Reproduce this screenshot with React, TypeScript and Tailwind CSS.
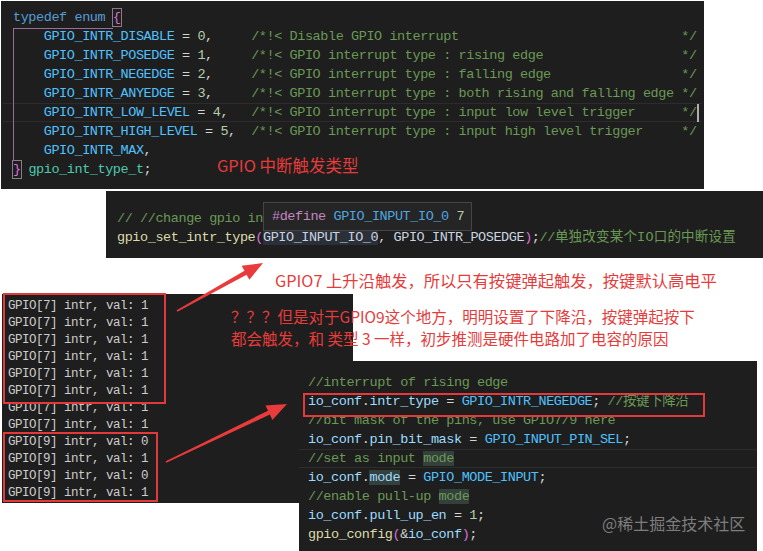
import React from "react";

const kw = "text-[#569cd6]";
const en = "text-[#4fc1ff]";
const op = "text-[#d4d4d4]";
const num = "text-[#b5cea8]";
const cm = "text-[#6a9955]";
const ty = "text-[#4ec9b0]";
const fn = "text-[#dcdcaa]";
const br = "text-[#da70d6]";
const va = "text-[#9cdcfe]";
const mc = "text-[#c8d4e0]";

const mono =
  "font-['Liberation_Mono','Noto_Sans_CJK_SC',monospace] text-[13.5px] tracking-[-0.42px] whitespace-pre";
const red =
  "font-['Noto_Sans_CJK_SC','Noto_Sans',sans-serif] text-[#e63b3b] whitespace-pre";

type Tok = [string, string];

const enumRows: [string, string, string][] = [
  ["GPIO_INTR_DISABLE", "0", "/*!< Disable GPIO interrupt"],
  ["GPIO_INTR_POSEDGE", "1", "/*!< GPIO interrupt type : rising edge"],
  ["GPIO_INTR_NEGEDGE", "2", "/*!< GPIO interrupt type : falling edge"],
  ["GPIO_INTR_ANYEDGE", "3", "/*!< GPIO interrupt type : both rising and falling edge"],
  ["GPIO_INTR_LOW_LEVEL", "4", "/*!< GPIO interrupt type : input low level trigger"],
  ["GPIO_INTR_HIGH_LEVEL", "5", "/*!< GPIO interrupt type : input high level trigger"],
];

function Line({ toks, className = "" }: { toks: Tok[]; className?: string }) {
  return (
    <div className={"h-[19px] leading-[19px] " + className}>
      {toks.map(([t, c], i) => (
        <span key={i} className={c}>
          {t}
        </span>
      ))}
    </div>
  );
}

function Arrow({ x1, y1, x2, y2 }: { x1: number; y1: number; x2: number; y2: number }) {
  const dx = x2 - x1;
  const dy = y2 - y1;
  const len = Math.hypot(dx, dy);
  const ux = dx / len;
  const uy = dy / len;
  const px = -uy;
  const py = ux;
  const headLen = 20;
  const headW = 8;
  const bx = x2 - ux * headLen;
  const by = y2 - uy * headLen;
  const t0 = 0.8;
  const t1 = 2.2;
  const pts = [
    [x1 + px * t0, y1 + py * t0],
    [bx + px * t1, by + py * t1],
    [bx + px * headW, by + py * headW],
    [x2, y2],
    [bx - px * headW, by - py * headW],
    [bx - px * t1, by - py * t1],
    [x1 - px * t0, y1 - py * t0],
  ]
    .map((p) => p[0].toFixed(1) + "," + p[1].toFixed(1))
    .join(" ");
  return <polygon points={pts} fill="#e93b3b" />;
}

export default function App() {
  return (
    <div className="relative w-[763px] h-[551px] bg-white overflow-hidden">
      {/* Panel 1: enum */}
      <div className={"absolute left-[1px] top-[1px] w-[703px] h-[188px] bg-[#1e1e1e] pt-[7px] flex flex-col " + mono}>
        <div className="pl-[12px] h-[19px] leading-[19px]">
          <span className={kw}>typedef enum </span>
          <span className={br + " inline-block h-[17px] leading-[17px] outline outline-1 outline-[#8c7a8c]"}>{"{"}</span>
        </div>
        {enumRows.map(([name, n, c], i) => {
          const head = "    " + name + " = " + n + ",";
          const pad = " ".repeat(Math.max(1, 31 - head.length));
          return (
            <Line
              key={i}
              className={
                i === 4
                  ? "mx-[2px] pl-[10px] shadow-[inset_0_1px_0_#2c2c2c,inset_0_-1px_0_#2c2c2c]"
                  : "pl-[12px]"
              }
              toks={[
                ["    ", op],
                [name, en],
                [" = ", op],
                [n, num],
                [",", op],
                [pad, op],
                [c.padEnd(56, " ") + "*/", cm],
              ]}
            />
          );
        })}
        <Line className="pl-[12px]" toks={[["    ", op], ["GPIO_INTR_MAX", en], [",", op]]} />
        <div className="pl-[12px] h-[19px] leading-[19px]">
          <span className={br + " inline-block h-[17px] leading-[17px] outline outline-1 outline-[#8c7a8c]"}>{"}"}</span>
          <span className={op}> </span>
          <span className={ty}>gpio_int_type_t</span>
          <span className={op}>;</span>
        </div>
        {/* bracket guide */}
        <div className="absolute left-[12px] top-[27px] w-[100px] h-[133px] border-l border-t border-[#9a6c98]" />
        {/* cursor */}
        <div className="absolute left-[696px] top-[103px] w-[2px] h-[18px] bg-[#aeafad]" />
        <div className={"absolute left-[216px] top-[153px] leading-[22px] text-[16.5px] tracking-normal " + red}>GPIO 中断触发类型</div>
      </div>

      {/* Panel 2: set intr type */}
      <div className={"absolute left-[106px] top-[191px] w-[657px] h-[67px] bg-[#1e1e1e] pt-[18px] pl-[11px] flex flex-col " + mono}>
        <Line toks={[["// //change gpio in", cm]]} />
        <div className="h-[19px] leading-[19px]">
          <span className={fn}>gpio_set_intr_type</span>
          <span className={br}>(</span>
          <span className={mc + " bg-[#2b3038]"}>GPIO_INPUT_IO_0</span>
          <span className={op}>, </span>
          <span className={mc}>GPIO_INTR_POSEDGE</span>
          <span className={br}>)</span>
          <span className={op}>;</span>
          <span className={cm}>//</span>
          <span className={cm + " tracking-[0.2px]"}>单独改变某个IO口的中断设置</span>
        </div>
        <div className="absolute left-[157px] top-[11px] w-[209px] h-[29px] bg-[#252526] border border-[#454545] pl-[8px] leading-[27px]">
          <span className="text-[#c586c0]">#define</span>
          <span className={op}> </span>
          <span className="text-[#4fa6e0]">GPIO_INPUT_IO_0</span>
          <span className={op}> </span>
          <span className={num}>7</span>
        </div>
      </div>

      {/* Panel 3: console */}
      <div className="absolute left-[2px] top-[294px] w-[351px] h-[209px] bg-[#1e1e1e] pt-[4px] pl-[6px] flex flex-col font-['Liberation_Mono',monospace] text-[12.5px] tracking-[-0.5px] text-[#cccccc] whitespace-pre">
        {[1, 1, 1, 1, 1, 1, 1, 1].map((v, i) => (
          <div key={"a" + i} className="h-[17px] leading-[17px]">
            GPIO[7] intr, val: {v}
          </div>
        ))}
        {[0, 1, 0, 1].map((v, i) => (
          <div key={"b" + i} className="h-[17px] leading-[17px]">
            GPIO[9] intr, val: {v}
          </div>
        ))}
      </div>

      {/* Panel 4: io_conf */}
      <div className={"absolute left-[299px] top-[361px] w-[458px] h-[190px] bg-[#1e1e1e] pt-[12px] flex flex-col " + mono}>
        <Line className="pl-[9px]" toks={[["//interrupt of rising edge", cm]]} />
        <Line
          className="pl-[9px]"
          toks={[
            ["io_conf", va],
            [".", op],
            ["intr_type", va],
            [" = ", op],
            ["GPIO_INTR_NEGEDGE", en],
            [";", op],
            [" //按键下降沿", cm],
          ]}
        />
        <Line className="pl-[9px]" toks={[["//bit mask of the pins, use GPIO7/9 here", cm]]} />
        <Line
          className="pl-[9px]"
          toks={[
            ["io_conf", va],
            [".", op],
            ["pin_bit_mask", va],
            [" = ", op],
            ["GPIO_INPUT_PIN_SEL", en],
            [";", op],
          ]}
        />
        <div className="h-[19px] leading-[19px] pl-[9px] shadow-[inset_0_1px_0_#2c2c2c,inset_0_-1px_0_#2c2c2c]">
          <span className={cm}>//set as input </span>
          <span className={cm + " bg-[#33403b]"}>mode</span>
        </div>
        <div className="h-[19px] leading-[19px] pl-[9px]">
          <span className={va}>io_conf</span>
          <span className={op}>.</span>
          <span className={va + " bg-[#33403b]"}>mode</span>
          <span className={op}> = </span>
          <span className={en}>GPIO_MODE_INPUT</span>
          <span className={op}>;</span>
        </div>
        <div className="h-[19px] leading-[19px] pl-[9px]">
          <span className={cm}>//enable pull-up </span>
          <span className={cm + " bg-[#33403b]"}>mode</span>
        </div>
        <Line
          className="pl-[9px]"
          toks={[
            ["io_conf", va],
            [".", op],
            ["pull_up_en", va],
            [" = ", op],
            ["1", num],
            [";", op],
          ]}
        />
        <Line
          className="pl-[9px]"
          toks={[
            ["gpio_config", fn],
            ["(", br],
            ["&", op],
            ["io_conf", va],
            [")", br],
            [";", op],
          ]}
        />
        <div className="absolute left-[303px] top-[151px] leading-[22px] font-['Noto_Sans_CJK_SC',sans-serif] text-[16px] tracking-normal text-[#7d7d7d]">
          @稀土掘金技术社区
        </div>
      </div>

      {/* Red boxes */}
      <div className="absolute left-[3px] top-[293px] w-[163px] h-[111px] border-2 border-[#e23a3a]" />
      <div className="absolute left-[3px] top-[432px] w-[155px] h-[70px] border-2 border-[#e23a3a]" />
      <div className="absolute left-[303px] top-[393px] w-[402px] h-[24px] border-2 border-[#e23a3a]" />

      {/* Red annotations */}
      <div className={"absolute left-[275px] top-[269px] leading-[22px] text-[16.3px] " + red}>
        GPIO7 上升沿触发，所以只有按键弹起触发，按键默认高电平
      </div>
      <div className={"absolute left-[231px] top-[305px] leading-[22px] text-[15.5px] flex flex-col " + red}>
        <div>？？？但是对于GPIO9这个地方，明明设置了下降沿，按键弹起按下</div>
        <div>都会触发，和 类型 3 一样，初步推测是硬件电路加了电容的原因</div>
      </div>

      {/* Arrows */}
      <svg className="absolute left-0 top-0 pointer-events-none" width="763" height="551">
        <Arrow x1={177} y1={311} x2={263} y2={263} />
        <Arrow x1={166} y1={462} x2={287} y2={404} />
      </svg>
    </div>
  );
}
